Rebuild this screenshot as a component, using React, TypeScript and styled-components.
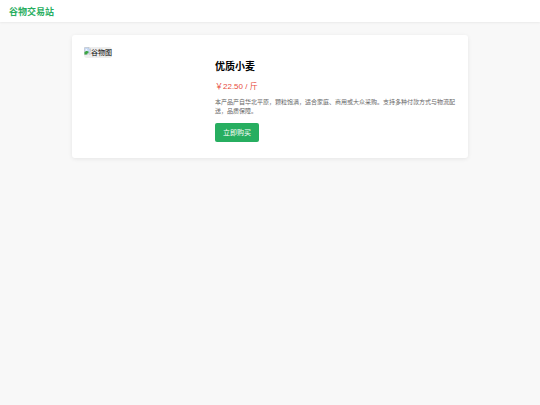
import React from 'react'
import styled, { createGlobalStyle } from 'styled-components'

const App = () => (
  <>
    <GlobalStyle />
    <Header>
      <Brand>谷物交易站</Brand>
    </Header>
    <Product>
      <Media>
        <Placeholder>
          <MissingIcon />
          <span>谷物图</span>
        </Placeholder>
      </Media>
      <Info>
        <Name>优质小麦</Name>
        <Price>￥22.50 / 斤</Price>
        <Description>
          本产品产自华北平原，颗粒饱满，适合家庭、商用或大众采购。支持多种付款方式与物流配送，品质保障。
        </Description>
        <BuyButton type="button">立即购买</BuyButton>
      </Info>
    </Product>
  </>
)

export default App;

const MissingIcon = () => (
  <svg width="7" height="8" viewBox="0 0 14 16" aria-hidden="true">
    <path d="M1 1h9l3 3v5l-6 6H1z" fill="#c5d8f5" stroke="#b4b8bd" />
    <path d="M10 1v3h3" fill="#fff" stroke="#b4b8bd" />
    <path d="M3 6a1.500 1.500 0 0 1 3-.5a1 1 0 0 1 1 1.500H3z" fill="#fff" />
    <path d="M1 15v-4c2-4 6-4 9-1l-5 5z" fill="#3da542" />
    <path d="M13 11v4H9z" fill="#b4b8bd" />
  </svg>
)

const GlobalStyle = createGlobalStyle`
  * {
    box-sizing: border-box;
  }
  body {
    margin: 0;
    background: #f8f8f8;
    color: #000;
    font-family: "Liberation Sans", "Noto Sans CJK SC", sans-serif;
    font-size: 7px;
  }
`
const Header = styled.header`
  display: flex;
  align-items: center;
  padding: 6px 9px 4px;
  background: #fff;
  box-shadow: 0 1px 2px rgba(0, 0, 0, 0.06);
`
const Brand = styled.div`
  color: #27ae60;
  font-size: 9px;
  font-weight: bold;
  line-height: 12px;
`
const Product = styled.main`
  display: flex;
  gap: 12px;
  max-width: 396px;
  margin: 13px auto;
  padding: 12px;
  border-radius: 3px;
  background: #fff;
  box-shadow: 0 1px 4px rgba(0, 0, 0, 0.08);
`
const Media = styled.div`
  flex: 1 1 0;
`
const Placeholder = styled.div`
  display: inline-flex;
  align-items: flex-start;
  border-radius: 3px;
  background: #eee;
  line-height: 11px;
`
const Info = styled.section`
  flex: 0 0 241px;
  padding: 12px 0 4px;
`
const Name = styled.h1`
  margin: 0 0 7px;
  font-size: 10px;
  line-height: 15px;
`
const Price = styled.p`
  margin: 0 0 5px;
  color: #e74c3c;
  font-size: 8px;
  line-height: 12px;
`
const Description = styled.p`
  margin: 0 0 7px;
  color: #666;
  font-size: 6px;
  line-height: 9px;
`
const BuyButton = styled.button`
  display: block;
  padding: 5px 8px 4px;
  border: 0;
  border-radius: 2px;
  background: #27ae60;
  color: #fff;
  font-family: inherit;
  font-size: 7px;
  line-height: 10px;
  cursor: pointer;
`
